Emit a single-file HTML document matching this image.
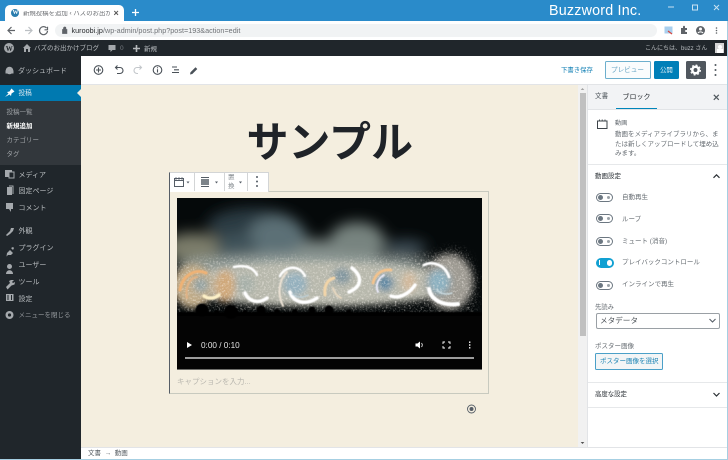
<!DOCTYPE html>
<html lang="ja"><head><meta charset="utf-8"><title>新規投稿を追加</title>
<style>
html,body{margin:0;padding:0;width:728px;height:460px;overflow:hidden;background:#fff}
body{font-family:"Liberation Sans","Noto Sans CJK JP",sans-serif;position:relative}
.a{position:absolute}
.t{position:absolute;white-space:nowrap;line-height:1}
svg{position:absolute;overflow:visible}
.m{color:#b9bdc0;font-size:7px}
.s{color:#9da1a5;font-size:6.500px}
.l{color:#666c72;font-size:6.500px}
.tg{position:absolute;left:595.500px;width:15.500px;height:7px;border:1.200px solid #6c7781;border-radius:6px;box-sizing:content-box}
.tg:before{content:"";position:absolute;left:1.500px;top:1px;width:5px;height:5px;border-radius:50%;background:#6c7781}
.tg:after{content:"";position:absolute;right:2.500px;top:2px;width:3px;height:3px;border-radius:50%;background:#9aa1a7}
</style></head><body>

<!-- Browser chrome -->
<div class="a" style="left:0;top:0;width:728px;height:21px;background:#2a8bca"></div>
<div class="a" style="left:5px;top:5px;width:119px;height:17px;background:#fff;border-radius:5px 5px 0 0"></div>
<div class="a" style="left:11px;top:8.500px;width:8px;height:8px;border-radius:50%;background:#2a7dae"></div>
<div class="t" style="left:12.500px;top:9.800px;font:bold 6px 'Liberation Serif',serif;color:#fff">W</div>
<div class="t" style="left:23px;top:10.500px;width:87px;overflow:hidden;font-size:6.400px;color:#6a6d71">新規投稿を追加 ‹ バズのお出かけブログ</div>
<div class="t" style="left:113.500px;top:8.500px;font-size:9px;font-weight:bold;color:#555">×</div>
<svg style="left:0;top:0" width="728" height="40" fill="none">
<path d="M132 12.500h7M135.500 9v7" stroke="#fff" stroke-width="1.300"/>
<path d="M15 30.500H8M11.500 27l-3.500 3.500 3.500 3.500" stroke="#5f6368" stroke-width="1.200"/>
<path d="M25 30.500h7M28.500 27l3.500 3.500-3.500 3.500" stroke="#bcc0c4" stroke-width="1.200"/>
<path d="M46.500 28a4 4 0 1 0 1 3M47.500 26.800v3h-3" stroke="#5f6368" stroke-width="1.200"/>
<path d="M648.500 26.500l1.100 2.500 2.600.2-2 1.700.7 2.600-2.400-1.400-2.400 1.400.7-2.600-2-1.700 2.600-.2z" stroke="#5f6368" stroke-width=".8"/>
<rect x="664.500" y="26.500" width="8" height="7" fill="#a9cfee"/><path d="M668 31l4 3" stroke="#d9453c" stroke-width="1.200"/>
<path d="M681 28h2v-1.300a1 1 0 0 1 2 0V28h2v2h-1a1 1 0 0 0 0 2h1v2h-6z" fill="#5f6368"/>
<circle cx="700.500" cy="30.500" r="4.500" fill="#5f6368"/><circle cx="700.500" cy="29" r="1.500" fill="#fff"/><path d="M698 33c1-1.500 4-1.500 5 0" stroke="#fff"/>
<g fill="#5f6368"><circle cx="716.500" cy="28" r=".8"/><circle cx="716.500" cy="30.500" r=".8"/><circle cx="716.500" cy="33" r=".8"/></g>
<path d="M668 7h6" stroke="#c9e2f2"/><rect x="692.500" y="5" width="5" height="5" stroke="#c9e2f2"/><path d="M714 5l5 5M719 5l-5 5" stroke="#c9e2f2"/>
</svg>
<div class="a" style="left:55px;top:24px;width:602px;height:13px;border-radius:7px;background:#f1f3f4"></div>
<svg style="left:0;top:0" width="70" height="40" fill="none"><path d="M62.500 29.500h4.400v4h-4.400zM63.500 29.500v-1.300a1.200 1.200 0 0 1 2.400 0v1.300" fill="#5f6368" stroke="#5f6368" stroke-width=".7"/></svg>
<div class="t" style="left:71.500px;top:26.500px;font-size:7.200px;color:#6f7276;letter-spacing:.03px"><span style="color:#26282b">kuroobi.jp</span>/wp-admin/post.php?post=193&amp;action=edit</div>
<div class="t" style="left:549px;top:3.500px;font-size:14.300px;color:#fff;letter-spacing:.2px">Buzzword Inc.</div>

<!-- Admin bar -->
<div class="a" style="left:0;top:40px;width:728px;height:16px;background:#20262b"></div>
<div class="a" style="left:4px;top:43px;width:10px;height:10px;border-radius:50%;background:#a2a6aa"></div>
<div class="t" style="left:5.800px;top:44.800px;font:bold 7px 'Liberation Serif',serif;color:#20262b">W</div>
<svg style="left:0;top:40px" width="150" height="16">
<path d="M23 8l4-4 4 4h-1v4h-2V9h-2v3h-2V8z" fill="#a5a9ad"/>
<path d="M108.500 5h7v5h-3l-2 2v-2h-2z" fill="#a5a9ad"/>
<path d="M133 8.500h7M136.500 5v7" stroke="#b5b8bb" stroke-width="1.600"/>
</svg>
<div class="t" style="left:34px;top:45.800px;font-size:6.500px;color:#b9bdc0">バズのお出かけブログ</div>
<div class="t" style="left:120px;top:46px;font-size:6.500px;color:#767b80">0</div>
<div class="t" style="left:144px;top:46.500px;font-size:6.500px;color:#b9bdc0">新規</div>
<div class="t" style="left:645px;top:46px;font-size:6px;color:#b9bdc0">こんにちは、buzz さん</div>
<div class="a" style="left:715px;top:43px;width:9px;height:10px;background:#d5d5d5"></div>
<div class="a" style="left:717.500px;top:44.500px;width:4px;height:4px;border-radius:50%;background:#fff"></div>
<div class="a" style="left:716.500px;top:49px;width:6px;height:4px;background:#fff"></div>

<!-- Left menu -->
<div class="a" style="left:0;top:56px;width:81px;height:404px;background:#20262b"></div>
<div class="a" style="left:0;top:85px;width:81px;height:16px;background:#0079b0"></div>
<div class="a" style="left:0;top:101px;width:81px;height:64px;background:#32373c"></div>
<svg style="left:0;top:56px" width="82" height="280">
<path d="M77 37l4-4v8z" fill="#f4eedf"/>
<circle cx="9.500" cy="14.500" r="3.800" fill="#a5a9ad"/><rect x="5.500" y="14.500" width="8" height="3" fill="#a5a9ad"/>
<path d="M5 41l3.500-3.500-1.500-1.500 2.500-.5 2-3 3 3-3 2-.5 2.500-1.500-1.500z" fill="#fff"/>
<path d="M5 114h7v7H5z" fill="#a5a9ad"/><path d="M9 116h5v6H9z" fill="#20262b" stroke="#a5a9ad"/>
<path d="M7 131h5v8H7z" fill="#a5a9ad"/><path d="M9 130h4v8" stroke="#a5a9ad" fill="none"/>
<path d="M6 147h7v6h-2v3l-2-3H6z" fill="#a5a9ad"/>
<path d="M6 179l4-4 1-3 3 0-1 3-3 3-3 2z" fill="#a5a9ad"/>
<path d="M7 197l3-3 3 3-2 2H8l-1.500 1.500zM11 192l2-1 1 1-1 2z" fill="#a5a9ad"/>
<circle cx="9.500" cy="210.500" r="2.500" fill="#a5a9ad"/><path d="M6 218c0-5 7-5 7 0z" fill="#a5a9ad"/>
<path d="M6 231l4-4-1-2 2-1 3 0-2 2 1 1 2-1-.5 2.500-3 1-4 4z" fill="#a5a9ad"/>
<rect x="6" y="238" width="7.500" height="7" fill="#a5a9ad"/><path d="M8 239v5M11.500 239v5" stroke="#20262b"/>
<circle cx="9.500" cy="259" r="4" fill="#a5a9ad"/><circle cx="9.500" cy="259" r="1.600" fill="#20262b"/>
</svg>
<div class="t m" style="left:18px;top:67.500px">ダッシュボード</div>
<div class="t" style="left:18.500px;top:90.500px;font-size:6.600px;color:#dce8ef">投稿</div>
<div class="t s" style="left:6.500px;top:110px">投稿一覧</div>
<div class="t" style="left:6.500px;top:123.500px;font-size:6.500px;font-weight:bold;color:#fff">新規追加</div>
<div class="t s" style="left:6.500px;top:137.500px">カテゴリー</div>
<div class="t s" style="left:6.500px;top:151.500px">タグ</div>
<div class="t m" style="left:18.500px;top:171.500px">メディア</div>
<div class="t m" style="left:18.500px;top:187.500px">固定ページ</div>
<div class="t m" style="left:18.500px;top:204.500px">コメント</div>
<div class="t m" style="left:18.500px;top:227.500px">外観</div>
<div class="t m" style="left:18.500px;top:244.500px">プラグイン</div>
<div class="t m" style="left:18.500px;top:261.500px">ユーザー</div>
<div class="t m" style="left:18.500px;top:278.500px">ツール</div>
<div class="t m" style="left:18.500px;top:295.500px">設定</div>
<div class="t" style="left:18.500px;top:312.500px;font-size:6.500px;color:#94989c">メニューを閉じる</div>

<!-- Editor header -->
<div class="a" style="left:81px;top:84px;width:647px;height:1px;background:#e2e4e7"></div>
<svg style="left:81px;top:56px" width="130" height="28" fill="none" stroke="#4a5158" stroke-width="1.100">
<circle cx="17.500" cy="14" r="4.300"/><path d="M15 14h5M17.500 11.500v5"/>
<path d="M36.500 9.500l-2 2 2 2M34.500 11.500h4.500a3 3 0 0 1 0 6h-3"/>
<path d="M58.500 9.500l2 2-2 2M60.500 11.500h-4.500a3 3 0 0 0 0 6h1" stroke="#c3c7cb"/>
<circle cx="76.500" cy="14" r="4.300"/><path d="M76.500 11.300v.9M76.500 13.300v3.200"/>
<path d="M91 11h5M93 13.800h5M91 16.500h7"/>
<path d="M109 18.500l.5-2.300 5-5 1.800 1.800-5 5z" fill="#4a5158" stroke="none"/>
</svg>
<div class="t" style="left:561px;top:67.500px;font-size:6.400px;color:#1682b6">下書き保存</div>
<div class="a" style="left:605px;top:61px;width:46px;height:18px;box-sizing:border-box;border:1px solid #6dafcd;border-radius:1.500px;background:#fafcfd"></div>
<div class="t" style="left:611px;top:67.500px;font-size:6.600px;color:#6aa6c5">プレビュー</div>
<div class="a" style="left:654px;top:61px;width:25px;height:18px;border-radius:1.500px;background:#007fb8"></div>
<div class="t" style="left:660px;top:68px;font-size:6.400px;color:#e4f1f7">公開</div>
<div class="a" style="left:685.500px;top:61px;width:20px;height:18px;border-radius:1.500px;background:#50575e"></div>
<svg style="left:685px;top:61px" width="40" height="18">
<circle cx="10.500" cy="9" r="3.200" fill="none" stroke="#fff" stroke-width="2.500"/>
<circle cx="10.500" cy="9" r="4.900" fill="none" stroke="#fff" stroke-width="1.200" stroke-dasharray="1.900 1.950"/>
<g fill="#50575e"><circle cx="30.500" cy="4" r="1"/><circle cx="30.500" cy="9" r="1"/><circle cx="30.500" cy="14" r="1"/></g>
</svg>

<!-- Canvas -->
<div class="a" style="left:81px;top:85px;width:497px;height:362px;background:#f4eedf"></div>
<div class="t" style="left:246.500px;top:122px;font-size:42px;font-weight:bold;color:#1f2328;letter-spacing:-.1px">サンプル</div>

<!-- Block -->
<div class="a" style="left:169px;top:191px;width:320px;height:202.500px;box-sizing:border-box;border:1px solid #c8cabf;border-left:1.800px solid #555d66"></div>
<div class="a" style="left:169px;top:172px;width:99.500px;height:19.500px;box-sizing:border-box;background:#fff;border:1px solid #d3d5d6;border-bottom:0;border-left:1.800px solid #555d66"></div>
<div class="a" style="left:194px;top:173px;width:1px;height:18px;background:#d3d5d6"></div>
<div class="a" style="left:224px;top:173px;width:1px;height:18px;background:#d3d5d6"></div>
<div class="a" style="left:247px;top:173px;width:1px;height:18px;background:#d3d5d6"></div>
<svg style="left:169px;top:172px" width="100" height="19" fill="none">
<path d="M5.500 6.500h9v8h-9zM5.500 8.500h9" stroke="#555d66"/>
<path d="M7 5v3M10 5v3M13 5v3" stroke="#555d66" stroke-width=".7"/>
<path d="M17.500 9.500h3l-1.500 2z" fill="#555d66"/>
<path d="M32 5.500h8M32 14.500h8" stroke="#555d66"/><rect x="32" y="7" width="8" height="6" fill="#7d848a"/>
<path d="M46 9.500h3l-1.500 2z" fill="#555d66"/>
<path d="M70 9.500h3l-1.500 2z" fill="#555d66"/>
<g fill="#555d66"><circle cx="88" cy="5" r="1"/><circle cx="88" cy="9.500" r="1"/><circle cx="88" cy="14" r="1"/></g>
</svg>
<div class="t" style="left:228px;top:175px;font-size:6.500px;color:#858b90">置</div>
<div class="t" style="left:228px;top:184px;font-size:6.500px;color:#858b90">換</div>

<!-- Video -->
<svg style="left:177px;top:198px" width="305" height="172" viewBox="0 0 305 172">
<defs>
<clipPath id="c"><rect width="305" height="172"/></clipPath>
<filter id="b8" x="-40%" y="-60%" width="180%" height="220%"><feGaussianBlur stdDeviation="7"/></filter>
<filter id="b4" x="-40%" y="-60%" width="180%" height="220%"><feGaussianBlur stdDeviation="3.500"/></filter>
<filter id="b05" x="-10%" y="-10%" width="120%" height="120%"><feGaussianBlur stdDeviation=".6"/></filter>
<filter id="sp" x="0" y="0" width="100%" height="100%"><feTurbulence type="fractalNoise" baseFrequency=".55" numOctaves="2" seed="4"/><feColorMatrix values="0 0 0 0 1  0 0 0 0 .95  0 0 0 0 .9  1.800 1.800 0 0 -1.750"/><feGaussianBlur stdDeviation=".35"/></filter>
<filter id="bm"><feGaussianBlur stdDeviation="4"/></filter>
<mask id="mk"><path d="M-5 70C10 58 40 58 60 60S110 56 130 60S190 58 230 58S270 44 285 52S305 90 298 116H-5z" fill="#fff" filter="url(#bm)"/></mask>
</defs>
<g clip-path="url(#c)">
<rect width="305" height="172" fill="#05090a"/>
<g filter="url(#b8)">
<ellipse cx="75" cy="28" rx="45" ry="18" fill="#2a3a42"/>
<ellipse cx="16" cy="50" rx="30" ry="15" fill="#7c7d6b"/>
<ellipse cx="100" cy="42" rx="30" ry="24" fill="#5c6f76"/>
<ellipse cx="60" cy="50" rx="20" ry="15" fill="#41525a"/>
<ellipse cx="180" cy="44" rx="28" ry="20" fill="#77837f"/>
<ellipse cx="140" cy="55" rx="22" ry="14" fill="#798582"/>
<ellipse cx="228" cy="50" rx="22" ry="8" fill="#3e4e57"/>
<ellipse cx="130" cy="70" rx="130" ry="14" fill="#929c98"/>
</g>
<g filter="url(#b4)">
<ellipse cx="140" cy="86" rx="148" ry="22" fill="#b7b8ac"/>
<ellipse cx="272" cy="84" rx="24" ry="28" fill="#9d9a92"/>
<ellipse cx="16" cy="88" rx="20" ry="22" fill="#c0ab88"/>
<ellipse cx="48" cy="88" rx="10" ry="16" fill="#cfa87a"/>
<ellipse cx="24" cy="87" rx="8" ry="8" fill="#94a3a2"/>
<ellipse cx="68" cy="86" rx="10" ry="10" fill="#a7b0a9"/>
<ellipse cx="118" cy="86" rx="12" ry="12" fill="#94b0bd"/>
<ellipse cx="165" cy="78" rx="9" ry="8" fill="#7f949e"/>
<ellipse cx="208" cy="85" rx="8" ry="8" fill="#5c86a2"/>
<ellipse cx="232" cy="84" rx="7" ry="10" fill="#d2b99c"/>
<ellipse cx="262" cy="84" rx="11" ry="12" fill="#8cb0c0"/>
</g>
<rect width="305" height="120" filter="url(#sp)" mask="url(#mk)" opacity=".55"/>
<g fill="none" stroke-linecap="round" filter="url(#b05)">
<path d="M3 92C5 78 18 70 29 75" stroke="#f0b274" stroke-width="3"/>
<path d="M10 100C8 90 12 80 20 79" stroke="#e2b385" stroke-width="2"/>
<path d="M27 98C31 101 37 101 42 97" stroke="#fdf0c7" stroke-width="3.500"/>
<path d="M57 69C65 67 76 68 80 77" stroke="#fff" stroke-width="2.500"/>
<path d="M68 95C72 104 82 106 90 100" stroke="#fff" stroke-width="3.500"/>
<path d="M103 78C108 68 122 66 128 78" stroke="#fff" stroke-width="2.500"/>
<path d="M106 108C100 95 102 82 110 74" stroke="#ece2d4" stroke-width="2"/>
<path d="M113 94C116 104 128 108 140 100" stroke="#fff" stroke-width="3.500"/>
<path d="M115 96C120 100 126 100 131 97" stroke="#bcd0da" stroke-width="1.200"/>
<path d="M175 70C185 78 186 88 172 94" stroke="#fff" stroke-width="3.500"/>
<path d="M148 97C147 88 150 82 157 80" stroke="#f3d5a8" stroke-width="3"/>
<path d="M156 90C157 94 160 98 164 100" stroke="#e8d8c0" stroke-width="2"/>
<path d="M196 85C198 76 205 71 214 72" stroke="#f4c38c" stroke-width="2.800"/>
<path d="M201 94C198 88 201 80 207 77" stroke="#eef" stroke-width="1.800"/>
<path d="M214 98C222 101 232 96 238 87" stroke="#fff" stroke-width="3.500"/>
<path d="M247 67C255 63 268 66 272 79" stroke="#fff" stroke-width="2.800"/>
<path d="M252 91C254 102 266 108 281 106" stroke="#fff" stroke-width="4"/>
<path d="M260 92C264 96 270 97 275 95" stroke="#cfe0e6" stroke-width="1.300"/>
</g>
<rect x="0" y="115" width="305" height="57" fill="#040404"/>
<g fill="#040404" filter="url(#b05)">
<circle cx="25" cy="112" r="6.500"/><circle cx="54" cy="114" r="7"/><circle cx="84" cy="112" r="4.500"/><circle cx="135" cy="112" r="3.500"/><circle cx="152" cy="112" r="4.500"/><circle cx="172" cy="114" r="2.500"/><circle cx="118" cy="114" r="3"/><circle cx="68" cy="115" r="3"/><circle cx="100" cy="114" r="3"/><circle cx="40" cy="115" r="3"/><circle cx="200" cy="115" r="2"/><circle cx="230" cy="115" r="2"/><circle cx="265" cy="115" r="2"/><circle cx="290" cy="115" r="2"/><rect x="0" y="114" width="305" height="4"/>
</g>
<path d="M10 144v6l5-3z" fill="#fff"/>
<path d="M238.500 145.500h2l2.500-2v7l-2.500-2h-2z" fill="#fff"/>
<path d="M244.500 145c1 1 1 3 0 4" stroke="#fff" stroke-width=".8" fill="none"/>
<path d="M266 146v-2h2M271 144h2v2M273 148v2h-2M268 150h-2v-2" stroke="#fff" stroke-width=".9" fill="none"/>
<g fill="#fff"><rect x="292" y="143.500" width="1.400" height="1.400"/><rect x="292" y="146.300" width="1.400" height="1.400"/><rect x="292" y="149.100" width="1.400" height="1.400"/></g>
<rect x="8" y="159" width="289" height="2" fill="#9d9d9d"/>
</g>
</svg>
<div class="t" style="left:201px;top:341.500px;font-size:8.200px;color:#e3e3e3">0:00 / 0:10</div>
<div class="a" style="left:177px;top:369px;width:305px;height:1px;background:#6e6e6a"></div>
<div class="t" style="left:177px;top:378px;font-size:7.500px;color:#b9b7af">キャプションを入力...</div>
<svg style="left:466px;top:404px" width="11" height="11"><circle cx="5.500" cy="5" r="4" fill="none" stroke="#555d66" stroke-width=".9"/><circle cx="5.500" cy="5" r="2" fill="#555d66"/></svg>

<!-- Canvas scrollbar -->
<div class="a" style="left:578px;top:85px;width:9px;height:362px;background:#f1f1f1"></div>
<div class="a" style="left:579.500px;top:93px;width:6.500px;height:243px;background:#c0c0c0"></div>
<svg style="left:578px;top:85px" width="9" height="362"><path d="M2.700 5l1.800-2 1.800 2z" fill="#a3a3a3"/><path d="M2.700 357l1.800 2 1.800-2z" fill="#505050"/></svg>

<!-- Right sidebar -->
<div class="a" style="left:587px;top:85px;width:141px;height:362px;background:#fff;border-left:1px solid #e2e4e7;box-sizing:border-box"></div>
<div class="a" style="left:588px;top:85px;width:139px;height:24px;background:#f2f3f5"></div>
<div class="a" style="left:588px;top:109px;width:139px;height:1px;background:#e2e4e7"></div>
<div class="a" style="left:615.500px;top:107.500px;width:41px;height:1.500px;background:#0085ba"></div>
<div class="t" style="left:595px;top:94px;font-size:6.600px;color:#50575d">文書</div>
<div class="t" style="left:622.500px;top:94px;font-size:7px;color:#22272c">ブロック</div>
<svg style="left:711px;top:92px" width="10" height="10"><path d="M2 2l5 5M7 2l-5 5" stroke="#50575d" stroke-width="1.200" transform="translate(.8,.8)"/></svg>
<svg style="left:596px;top:118px" width="14" height="12" fill="none"><path d="M1.500 3v7.500h9.500V3z" stroke="#3d444a"/><path d="M1.500 3h9.500M3.500 1.500v2M6.200 1.500v2M9 1.500v2" stroke="#3d444a" stroke-width=".9"/></svg>
<div class="t l" style="left:615px;top:120.500px;font-size:6.200px">動画</div>
<div class="t l" style="left:615px;top:132px">動画をメディアライブラリから、ま</div>
<div class="t l" style="left:615px;top:141.500px">たは新しくアップロードして埋め込</div>
<div class="t l" style="left:615px;top:150.500px">みます。</div>
<div class="a" style="left:588px;top:164px;width:139px;height:1px;background:#e6e8ea"></div>
<div class="t" style="left:595px;top:174px;font-size:6.500px;color:#292f34">動画設定</div>
<svg style="left:712px;top:172px" width="10" height="10"><path d="M1.500 5.800l3-3 3 3" fill="none" stroke="#2a2f34" stroke-width="1.200"/></svg>
<div class="tg" style="top:192.500px"></div>
<div class="t l" style="left:622px;top:194.500px">自動再生</div>
<div class="tg" style="top:214.300px"></div>
<div class="t l" style="left:622px;top:216.500px">ループ</div>
<div class="tg" style="top:236.500px"></div>
<div class="t l" style="left:622px;top:238.500px">ミュート (消音)</div>
<div class="a" style="left:595.500px;top:258px;width:18px;height:9.500px;border-radius:6px;background:#11a0d2"></div>
<div class="a" style="left:606.500px;top:260px;width:5.500px;height:5.500px;border-radius:50%;background:#fff"></div>
<div class="a" style="left:599px;top:260px;width:1px;height:5px;background:#fff"></div>
<div class="t l" style="left:622px;top:259.500px">プレイバックコントロール</div>
<div class="tg" style="top:280.500px"></div>
<div class="t l" style="left:622px;top:282px">インラインで再生</div>
<div class="t l" style="left:595px;top:305px;font-size:6.300px">先読み</div>
<div class="a" style="left:596px;top:313px;width:124px;height:16px;box-sizing:border-box;border:1px solid #9aa0a5;border-radius:2px;background:#fff"></div>
<div class="t" style="left:600px;top:317px;font-size:7.600px;color:#4a5056">メタデータ</div>
<svg style="left:708px;top:317px" width="10" height="8"><path d="M1.500 2l3 3 3-3" fill="none" stroke="#555d66" stroke-width="1.100"/></svg>
<div class="t l" style="left:595px;top:343.500px">ポスター画像</div>
<div class="a" style="left:595px;top:352.500px;width:68px;height:17px;box-sizing:border-box;border:1px solid #4ba0c8;border-radius:1.500px;background:#f3f5f6"></div>
<div class="t" style="left:600px;top:358.500px;font-size:6.500px;color:#1b83b4">ポスター画像を選択</div>
<div class="a" style="left:588px;top:382px;width:139px;height:1px;background:#e6e8ea"></div>
<div class="t" style="left:595px;top:392px;font-size:6.400px;color:#292f34">高度な設定</div>
<svg style="left:712px;top:390px" width="10" height="10"><path d="M1.500 3l3 3 3-3" fill="none" stroke="#2a2f34" stroke-width="1.200"/></svg>
<div class="a" style="left:588px;top:407px;width:139px;height:1px;background:#e6e8ea"></div>

<!-- Status bar -->
<div class="a" style="left:81px;top:447px;width:647px;height:1px;background:#e2e4e7"></div>
<div class="a" style="left:81px;top:448px;width:647px;height:11px;background:#fff"></div>
<div class="t" style="left:88px;top:450.500px;font-size:6.500px;color:#565c62">文書 &nbsp;→&nbsp; 動画</div>
<div class="a" style="left:0;top:459px;width:728px;height:1px;background:#a6cfe2"></div>
<div class="a" style="left:727px;top:21px;width:1px;height:439px;background:#a6cfe2"></div>
</body></html>
